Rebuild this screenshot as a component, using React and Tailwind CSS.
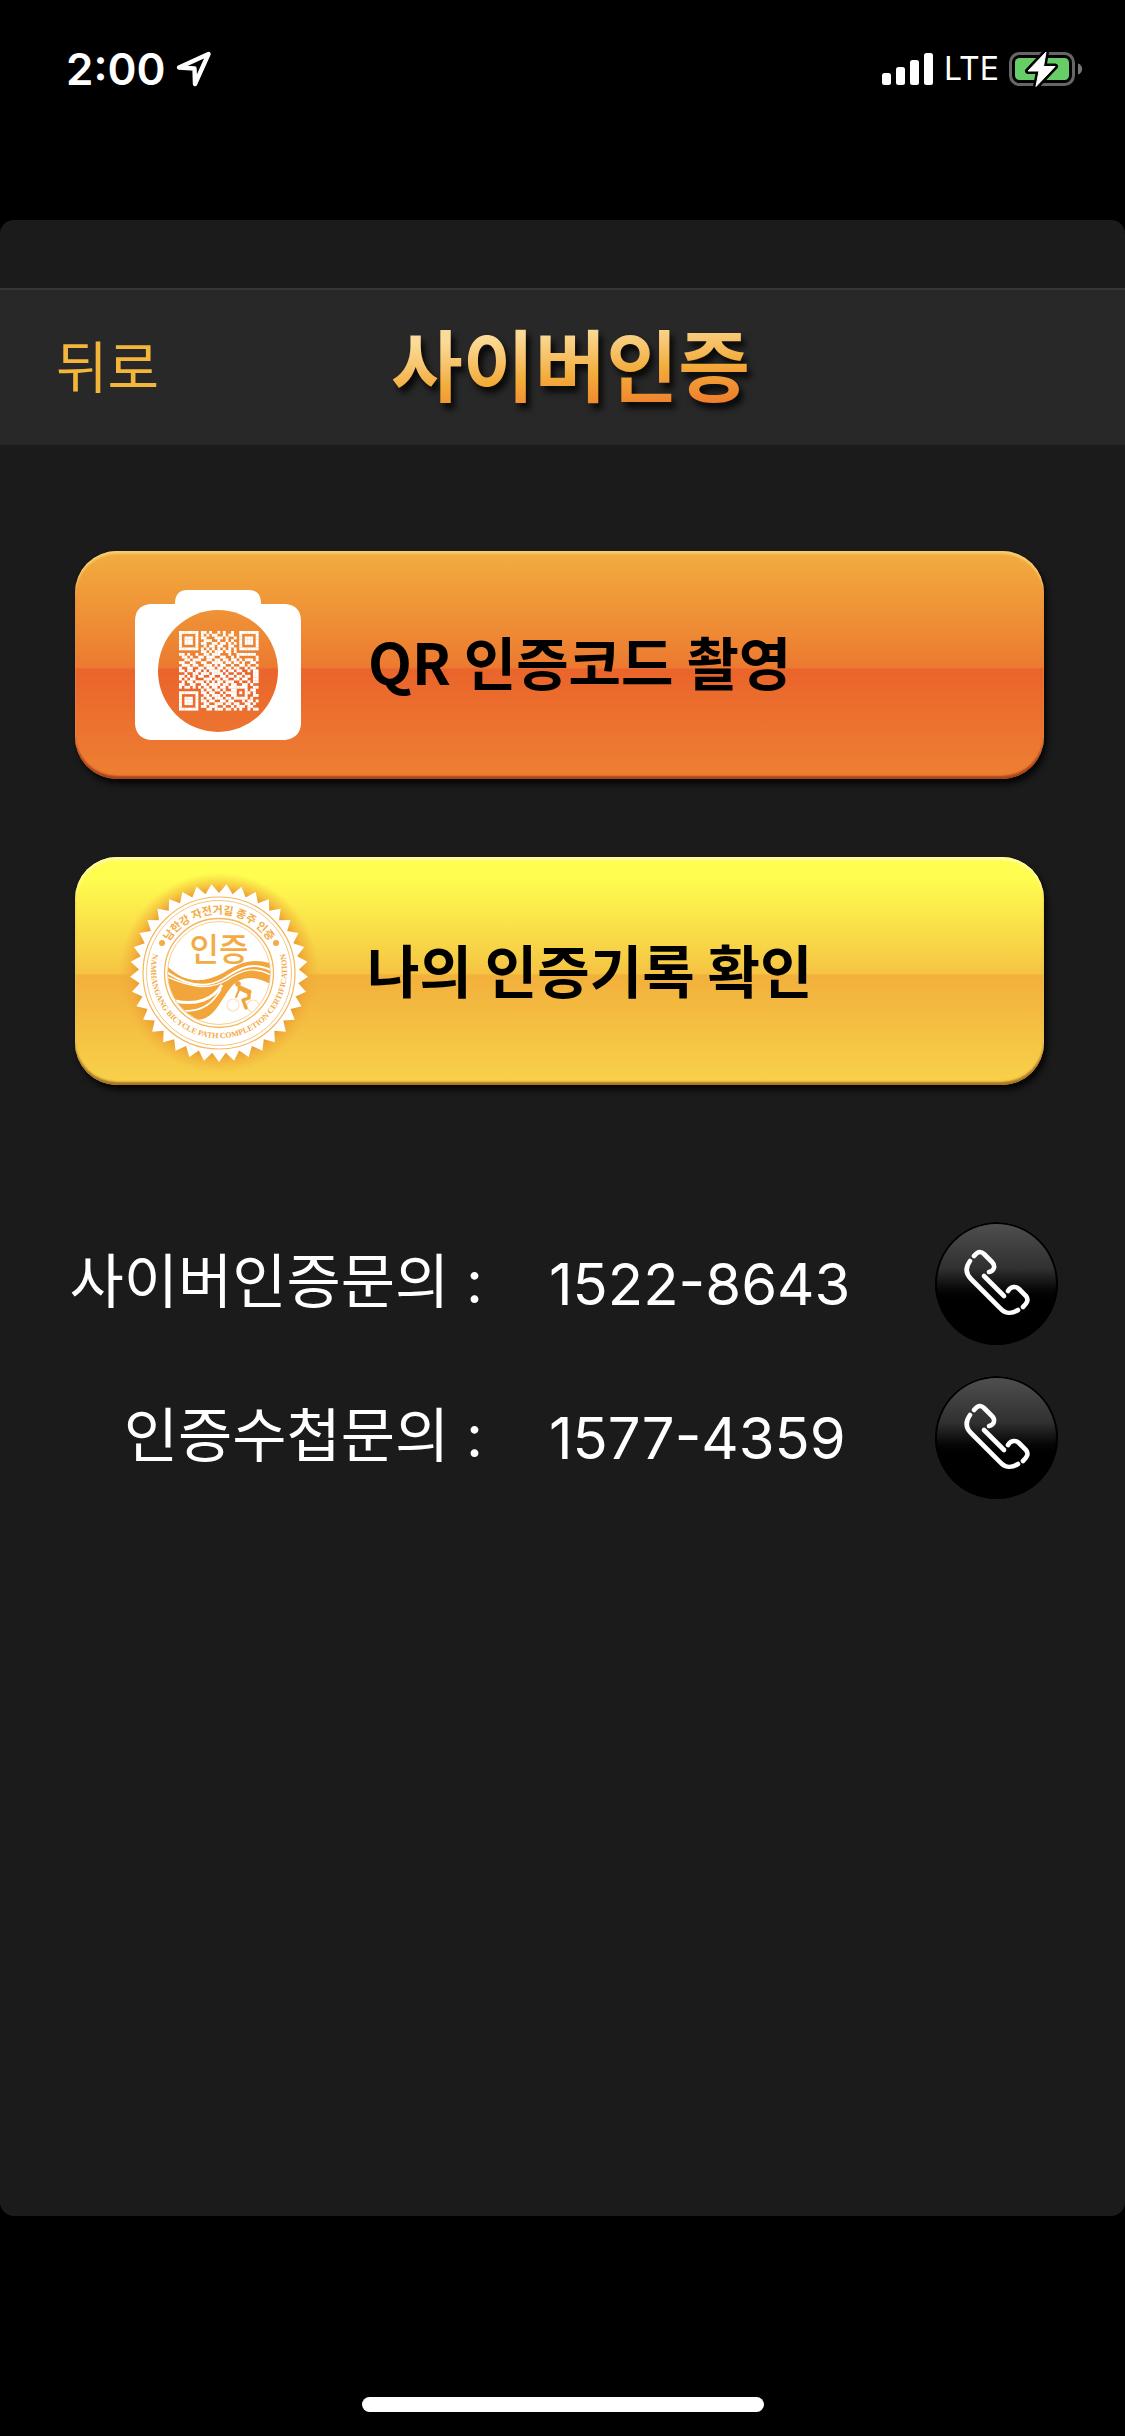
import React from "react";

// rows of the QR drawing, "1" is a filled module
const qrRows = [
  "11111110110100101001001111111",
  "10000010101011001011001000001",
  "10111010110001110100101011101",
  "10111010011100100101001011101",
  "10111010110011011010101011101",
  "10000010010110110011001000001",
  "11111110101010101010101111111",
  "00000000110101110110100000000",
  "11010010011011100010011111110",
  "01101001101110011001010000001",
  "00110111001101101101101011101",
  "11001100110011110110110100110",
  "01110110011101011001001101001",
  "10011001101110110110110010110",
  "11011011010111101011011001011",
  "00100110111011110100100100011",
  "11010101100110011011011011011",
  "10101100011101101100110110011",
  "01011011101010110111001001011",
  "11001100110111101101100110100",
  "10110101011011011011111110011",
  "00000000101101101001100010110",
  "11111110110110010111101011010",
  "10000010011011101001100010011",
  "10111010101101110110111110100",
  "10111010110110011011000101101",
  "10111010011001110110110011010",
  "10000010110111001001011101100",
  "11111110001101110110101001011",
];

// zigzag edge of the certification seal
const sealPoints = Array.from({ length: 74 }, (_, i) => {
  const radius = i % 2 === 0 ? 89 : 80;
  const angle = (Math.PI * 2 * i) / 74 + Math.PI / 2;
  return `${100 + radius * Math.cos(angle)},${100 + radius * Math.sin(angle)}`;
}).join(" ");

const contacts = [
  { id: 1, label: "사이버인증문의 :", phone: "1522-8643" },
  { id: 2, label: "인증수첩문의 :", phone: "1577-4359" },
];

const LocationIcon = () => (
  <svg viewBox="0 0 36 36" className="w-9 h-9" fill="none" aria-hidden="true">
    <path
      d="M3 16.5 L32.5 3 L19 33 L18.5 17.5 Z"
      stroke="white"
      strokeWidth="4.4"
      strokeLinejoin="round"
    />
  </svg>
);

const SignalIcon = () => (
  <svg viewBox="0 0 52 33" className="w-[52px] h-[33px]" fill="white" aria-hidden="true">
    <rect x="0" y="20" width="9" height="12" rx="2.5" />
    <rect x="14" y="14" width="9" height="18" rx="2.5" />
    <rect x="28" y="7" width="9" height="25" rx="2.5" />
    <rect x="42" y="0" width="9" height="32" rx="2.5" />
  </svg>
);

const BatteryIcon = () => (
  <svg viewBox="0 0 74 36" className="w-[74px] h-9" aria-hidden="true">
    <rect x="1.5" y="2.5" width="63" height="31" rx="9" fill="none" stroke="#666" strokeWidth="3" />
    <rect x="6" y="7" width="54" height="22" rx="4.5" fill="#67ce67" />
    <path d="M69 12.5 C74.5 14 74.5 22 69 23.5 Z" fill="#777" />
    <path
      d="M37 1 L19 20 H30 L27 35.5 L46 15.5 H34.5 Z"
      fill="white"
      stroke="black"
      strokeWidth="6"
      strokeLinejoin="round"
    />
    <path
      d="M37 1 L19 20 H30 L27 35.5 L46 15.5 H34.5 Z"
      fill="white"
      stroke="white"
      strokeWidth="1"
      strokeLinejoin="round"
    />
  </svg>
);

const CameraIcon = () => (
  <svg viewBox="0 0 168 150" className="w-[168px] h-[150px] shrink-0" aria-hidden="true">
    <defs>
      <mask id="lens">
        <rect width="168" height="150" fill="white" />
        <ellipse cx="84" cy="81" rx="60" ry="61" fill="black" />
      </mask>
    </defs>
    <path
      mask="url(#lens)"
      fill="white"
      d="M16 14 H41 V12 Q42 0 53 0 H115 Q126 0 127 12 V14 H152 Q167 16 167 31 V134 Q166 148 151 150 H16 Q2 148 1 134 V31 Q1 16 16 14 Z"
    />
    <g transform="translate(45 41) scale(2.74)" fill="white">
      {qrRows.map((row, y) =>
        row
          .split("")
          .map((cell, x) =>
            cell === "1" ? (
              <rect key={`${x}-${y}`} x={x} y={y} width="1.05" height="1.05" />
            ) : null
          )
      )}
    </g>
  </svg>
);

const SealIcon = () => (
  <svg viewBox="0 0 200 200" className="w-[200px] h-[200px] shrink-0" aria-hidden="true">
    <defs>
      <radialGradient id="glow">
        <stop offset="0.8" stopColor="#eb9a2c" />
        <stop offset="0.88" stopColor="#f0a636" stopOpacity="0.6" />
        <stop offset="1" stopColor="#f2ae3b" stopOpacity="0" />
      </radialGradient>
      <path id="arcTop" d="M41 100 A59 59 0 0 1 159 100" />
      <path id="arcBottom" d="M34.6 78.7 A68 68 0 1 0 165.4 78.7" />
      <clipPath id="inner">
        <circle cx="100" cy="100" r="51" />
      </clipPath>
    </defs>
    <circle cx="100" cy="100" r="100" fill="url(#glow)" />
    <polygon points={sealPoints} fill="white" />
    <g fill="none" stroke="#f5b75c">
      <circle cx="100" cy="100" r="76" strokeWidth="1.2" />
      <circle cx="100" cy="100" r="72.5" strokeWidth="0.8" />
      <circle cx="100" cy="100" r="54.5" strokeWidth="1.3" />
      <circle cx="100" cy="100" r="51.5" strokeWidth="0.7" />
    </g>
    <g fill="#f3ab45">
      <text className="font-['Noto_Sans_CJK_KR',sans-serif] text-[11px]" textAnchor="middle">
        <textPath href="#arcTop" startOffset="50%">
          남한강 자전거길 종주 인증
        </textPath>
      </text>
      <text className="font-['Liberation_Serif',serif] text-[8px]" textAnchor="middle">
        <textPath href="#arcBottom" startOffset="50%">
          NAMHANGANG BICYCLE PATH COMPLETION CERTIFICATION
        </textPath>
      </text>
      <circle cx="43" cy="70" r="3" />
      <circle cx="157" cy="70" r="3" />
      <text
        x="100"
        y="88"
        textAnchor="middle"
        className="font-['Noto_Sans_CJK_KR',sans-serif] text-[32px] font-medium"
      >
        인증
      </text>
    </g>
    <g clipPath="url(#inner)">
      <path
        d="M46 91 C66 112 85 110 104 100 C120 90 133 84 153 91 V112 C136 102 122 103 113 113 C99 130 96 147 76 147 C58 138 46 120 46 91 Z"
        fill="#f2a53a"
      />
      <g fill="none" stroke="white" strokeWidth="2">
        <path d="M46 98 C66 112 86 116 104 106 C122 94 134 88 154 98" />
        <path d="M46 103 C70 114 90 118 108 107 C124 96 136 93 154 103" strokeWidth="1.4" />
        <path d="M56 128 C78 133 94 126 103 112" strokeWidth="3" />
        <path d="M66 138 C84 138 94 130 102 116" strokeWidth="1.6" />
      </g>
      <g fill="none" stroke="#fbe3bd" strokeWidth="1.2">
        <circle cx="114" cy="132" r="6" />
        <circle cx="134" cy="133" r="6" />
      </g>
      <g fill="none" stroke="#f2a53a" strokeLinecap="round" strokeLinejoin="round">
        <path d="M121 115 L130 119" strokeWidth="5" />
        <path d="M120 117 L117 124" strokeWidth="2" />
        <path d="M130 119 L130 125 L124 127 L127 135" strokeWidth="3.4" />
      </g>
      <circle cx="119" cy="111" r="2.8" fill="#f2a53a" />
    </g>
  </svg>
);

const PhoneIcon = () => (
  <svg
    viewBox="0 0 123 123"
    className="w-[123px] h-[123px]"
    fill="none"
    stroke="white"
    strokeWidth="4.6"
    strokeLinecap="round"
    aria-hidden="true"
  >
    <path d="M35 39 C30 46 31 52 36 57 L65 86 C70 92 77 92 83 88" />
    <path d="M39 34 C43 29 46 29 49 32 L57 40 C61 44 59 49 54 50" />
    <path d="M49 54 L69 74" />
    <path d="M73 69 C76 64 81 64 84 67 L91 74 C94 78 92 81 88 85" />
  </svg>
);

const StatusBar = () => (
  <div className="h-[220px] pt-[46px] pl-[66px] pr-[42px] flex justify-between items-start text-white">
    <div className="h-[46px] flex items-center gap-[10px]">
      <span className="text-[44px] font-semibold">2:00</span>
      <LocationIcon />
    </div>
    <div className="h-[46px] flex items-center gap-[10px]">
      <SignalIcon />
      <span className="text-[32px]">LTE</span>
      <BatteryIcon />
    </div>
  </div>
);

const App = () => {
  return (
    <div className="min-h-screen bg-black flex flex-col font-['Inter','Noto_Sans_CJK_KR',sans-serif]">
      <StatusBar />

      <main className="flex-1 bg-[#1b1b1b] rounded-[14px] pt-[68px]">
        <header className="h-[157px] bg-[#282828] border-t-2 border-[#363636] pl-14 pr-10 grid grid-cols-[1fr_auto_1fr] items-center">
          <button className="justify-self-start text-[56px] leading-none text-[#f3b63a]">
            뒤로
          </button>
          <h1 className="text-[78px] leading-none font-bold drop-shadow-[4px_6px_3px_rgba(0,0,0,0.8)]">
            <span className="bg-linear-175 from-[#fadc98] from-20% via-[#f3ae3b] via-55% to-[#ee7a2c] to-90% bg-clip-text text-transparent">
              사이버인증
            </span>
          </h1>
        </header>

        <div className="pl-[75px] pr-[81px] pt-[106px] flex flex-col gap-[78px] font-['Noto_Sans_CJK_KR',sans-serif]">
          <button className="h-[228px] pl-[59px] rounded-[42px] flex items-center gap-[66px] text-[57px] font-bold text-black bg-[linear-gradient(to_bottom,#f2a93d_4%,#ec7a30_51%,#ea642b_52%,#ee7e32_96%)] shadow-[inset_0_3px_2px_#f5cc70,inset_0_-3px_2px_#a8431b,3px_5px_6px_rgba(0,0,0,0.8)]">
            <CameraIcon />
            <span className="pb-2">QR 인증코드 촬영</span>
          </button>
          <button className="h-[228px] pl-[44px] pt-1 rounded-[42px] flex items-center gap-[48px] text-[57px] font-bold text-black bg-[linear-gradient(to_bottom,#fffd50_9%,#f5c443_51%,#f2b03c_52%,#f7cf48_96%)] shadow-[inset_0_3px_2px_#fffaa0,inset_0_-3px_2px_#a8742a,3px_5px_6px_rgba(0,0,0,0.8)]">
            <SealIcon />
            <span className="pb-2">나의 인증기록 확인</span>
          </button>
        </div>

        <ul className="pt-[137px] px-[67px] flex flex-col gap-[31px] text-white">
          {contacts.map((item) => (
            <li key={item.id} className="flex items-center">
              <span className="w-[416px] pb-1 text-right text-[59px] leading-none whitespace-nowrap">
                {item.label}
              </span>
              <span className="flex-1 pl-[66px] text-[58px] leading-none">
                {item.phone}
              </span>
              <a
                href={`tel:${item.phone}`}
                aria-label={item.phone}
                className="rounded-full bg-linear-to-b from-[#505050] via-[#303030] via-38% to-black to-68% shadow-[inset_0_0_0_2px_#000]"
              >
                <PhoneIcon />
              </a>
            </li>
          ))}
        </ul>
      </main>

      <footer className="h-[220px] pb-6 flex items-end justify-center">
        <div className="w-[402px] h-[15px] rounded-full bg-white" />
      </footer>
    </div>
  );
};

export default App;
